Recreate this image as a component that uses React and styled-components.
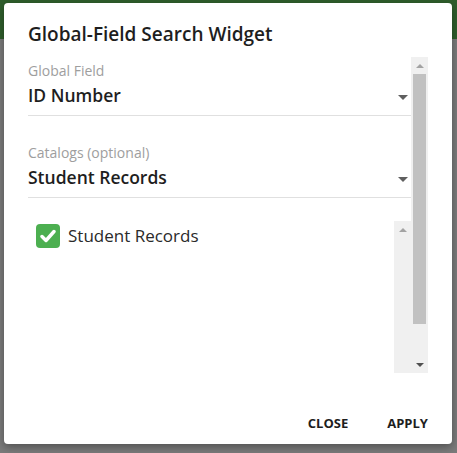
import React from 'react';
import styled, { createGlobalStyle, css } from 'styled-components';

const GlobalStyle = createGlobalStyle`
  html, body {
    margin: 0;
    padding: 0;
  }
  body {
    font-family: 'Open Sans', 'Noto Sans', sans-serif;
    color: #212121;
  }
`;

const Backdrop = styled.div`
  position: relative;
  width: 457px;
  height: 453px;
  display: flex;
  flex-direction: column;
  background: #7b7b7b;
  overflow: hidden;
`;

const HeaderBand = styled.div`
  height: 39px;
  background: #2f5e2c;
`;

const Dialog = styled.div`
  position: absolute;
  top: 3px;
  left: 4px;
  width: 448px;
  height: 441px;
  box-sizing: border-box;
  background: #fff;
  border-radius: 4px;
  box-shadow: 0 3px 8px rgba(0, 0, 0, 0.35);
  display: flex;
  flex-direction: column;
  padding: 19px 24px 0 24px;
`;

const Title = styled.h2`
  margin: 0;
  font-size: 19px;
  line-height: 24px;
  font-weight: 600;
  color: #1e1e1e;
`;

const Body = styled.div`
  margin-top: 11px;
  height: 316px;
  display: flex;
  overflow: hidden;
`;

const Fields = styled.div`
  flex: 1;
  display: flex;
  flex-direction: column;
  min-width: 0;
`;

const Field = styled.div`
  padding-top: ${(p) => p.top}px;
  border-bottom: 1px solid #e0e0e0;
  padding-bottom: 8px;
`;

const Label = styled.div`
  font-size: 14px;
  line-height: 20px;
  color: #9e9e9e;
`;

const Value = styled.div`
  display: flex;
  align-items: center;
  justify-content: space-between;
  margin-top: 2px;
  font-size: 17.5px;
  line-height: 24px;
  font-weight: 600;
  color: #1e1e1e;
  padding-right: 3px;
`;

const Caret = styled.span`
  width: 0;
  height: 0;
  margin-top: 4px;
  border-left: 5px solid transparent;
  border-right: 5px solid transparent;
  border-top: 5px solid #5f5f5f;
`;

const ListBox = styled.div`
  margin-top: 23px;
  flex: 1;
  display: flex;
  min-height: 0;
`;

const ListItems = styled.div`
  flex: 1;
  padding: 3px 0 0 8px;
`;

const ListItem = styled.label`
  display: flex;
  align-items: center;
  gap: 8px;
  font-size: 17px;
  line-height: 24px;
  color: #2a2a2a;
`;

const Check = styled.span`
  width: 24px;
  height: 24px;
  border-radius: 4px;
  background: #4caf50;
  display: flex;
  align-items: center;
  justify-content: center;
`;

const Scrollbar = styled.div`
  width: 17px;
  flex: none;
  background: #f0f0f0;
  display: flex;
  flex-direction: column;
  align-items: center;
`;

const Arrow = styled.div`
  flex: none;
  width: 17px;
  height: 17px;
  display: flex;
  align-items: center;
  justify-content: center;
  &::after {
    content: '';
    width: 0;
    height: 0;
    border-left: 4px solid transparent;
    border-right: 4px solid transparent;
    ${(p) =>
      p.down
        ? css`
            border-top: 4px solid #505050;
          `
        : css`
            border-bottom: 4px solid #a3a3a3;
          `}
  }
`;

const Thumb = styled.div`
  width: 13px;
  height: ${(p) => p.size}px;
  background: #c1c1c1;
  margin-bottom: auto;
`;

const Actions = styled.div`
  margin-top: auto;
  height: 36px;
  display: flex;
  justify-content: flex-end;
  align-items: center;
  gap: 39px;
  padding-bottom: 3px;
`;

const ActionButton = styled.button`
  border: none;
  background: none;
  padding: 0;
  font-family: inherit;
  font-size: 13px;
  font-weight: 700;
  color: #1e1e1e;
  text-transform: uppercase;
  cursor: pointer;
`;

const App = () => {
  return (
    <>
      <GlobalStyle />
      <Backdrop>
        <HeaderBand />
        <Dialog>
          <Title>Global-Field Search Widget</Title>
          <Body>
            <Fields>
              <Field top={4}>
                <Label>Global Field</Label>
                <Value>
                  ID Number
                  <Caret />
                </Value>
              </Field>
              <Field top={27}>
                <Label>Catalogs (optional)</Label>
                <Value>
                  Student Records
                  <Caret />
                </Value>
              </Field>
              <ListBox>
                <ListItems>
                  <ListItem>
                    <Check>
                      <svg width="16" height="14" viewBox="0 0 16 14">
                        <path
                          d="M2 7.5 L6 11.5 L14 2.5"
                          fill="none"
                          stroke="#fff"
                          strokeWidth="3.4"
                          strokeLinecap="round"
                          strokeLinejoin="round"
                        />
                      </svg>
                    </Check>
                    Student Records
                  </ListItem>
                </ListItems>
                <Scrollbar>
                  <Arrow />
                </Scrollbar>
              </ListBox>
            </Fields>
            <Scrollbar>
              <Arrow />
              <Thumb size={250} />
              <Arrow down />
            </Scrollbar>
          </Body>
          <Actions>
            <ActionButton>Close</ActionButton>
            <ActionButton>Apply</ActionButton>
          </Actions>
        </Dialog>
      </Backdrop>
    </>
  );
};

export default App;
